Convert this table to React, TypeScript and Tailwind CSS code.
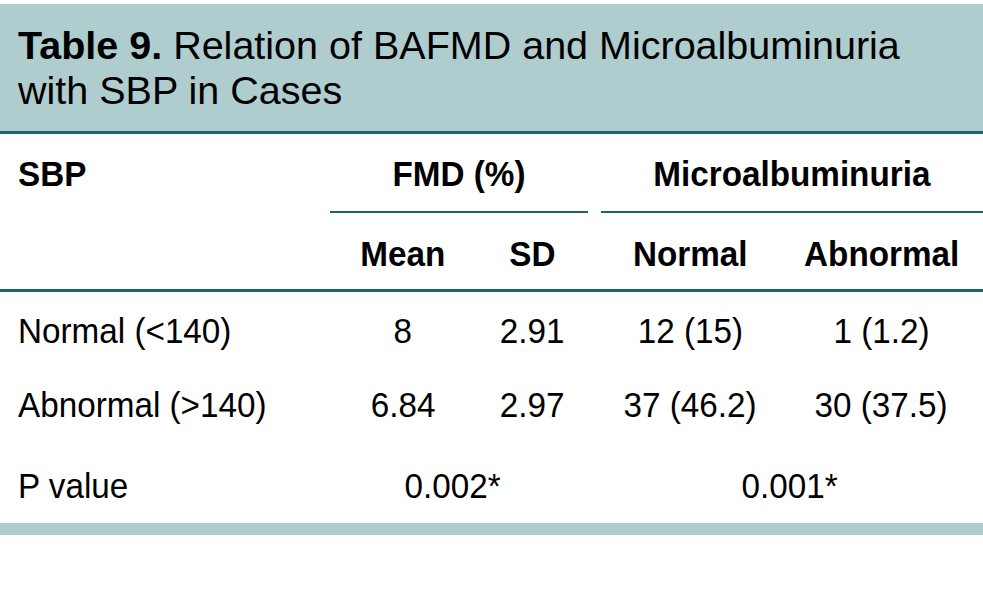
const rows = [
  { label: "Normal (<140)", mean: "8", sd: "2.91", normal: "12 (15)", abnormal: "1 (1.2)", h: "h-[74px]" },
  { label: "Abnormal (>140)", mean: "6.84", sd: "2.97", normal: "37 (46.2)", abnormal: "30 (37.5)", h: "h-[80px]" },
];

const cols = "grid grid-cols-[330px_146px_112px_13px_179px_203px]";

// the source table uses a slightly condensed Arial
const T = ({ children, left }: { children: React.ReactNode; left?: boolean }) => (
  <span className={`inline-block scale-x-[0.95] whitespace-nowrap ${left ? "origin-left" : "origin-center"}`}>
    {children}
  </span>
);

const App = () => {
  return (
    <div className="w-[983px] h-[595px] bg-white pt-[4px] text-black font-['Liberation_Sans',Arial,sans-serif]">
      <div className="bg-[#afcdce] border-b-[3px] border-[#1d6568] h-[130px] pl-[18px] pt-[19px]">
        <h1 className="text-[39.5px] leading-[45px]">
          <span className="font-bold">Table 9.</span> Relation of BAFMD and Microalbuminuria
          <br />
          with SBP in Cases
        </h1>
      </div>

      <div className="border-b-[3px] border-[#1d6568] text-[35px] leading-[38px] font-bold">
        <div className={`${cols} h-[79px]`}>
          <div className="pl-[18px] pt-[21px]"><T left>SBP</T></div>
          <div className="col-span-2 border-b-2 border-[#1d6568] pt-[21px] text-center"><T>FMD (%)</T></div>
          <div />
          <div className="col-span-2 border-b-2 border-[#1d6568] pt-[21px] text-center"><T>Microalbuminuria</T></div>
        </div>
        <div className={`${cols} h-[76px] pt-[22px] text-center`}>
          <div />
          <div><T>Mean</T></div>
          <div><T>SD</T></div>
          <div />
          <div><T>Normal</T></div>
          <div><T>Abnormal</T></div>
        </div>
      </div>

      <div className="text-[35px] leading-[38px]">
        {rows.map((r) => (
          <div key={r.label} className={`${cols} ${r.h} pt-[20px] text-center`}>
            <div className="pl-[18px] text-left"><T left>{r.label}</T></div>
            <div><T>{r.mean}</T></div>
            <div><T>{r.sd}</T></div>
            <div />
            <div><T>{r.normal}</T></div>
            <div><T>{r.abnormal}</T></div>
          </div>
        ))}
        <div className={`${cols} h-[77px] pt-[21px] text-center`}>
          <div className="pl-[18px] text-left"><T left>P value</T></div>
          <div className="col-span-2 pr-[12px]"><T>0.002*</T></div>
          <div />
          <div className="col-span-2 pr-[4px]"><T>0.001*</T></div>
        </div>
      </div>

      <div className="h-[12px] bg-[#afcdce]" />
    </div>
  );
};

export default App;
